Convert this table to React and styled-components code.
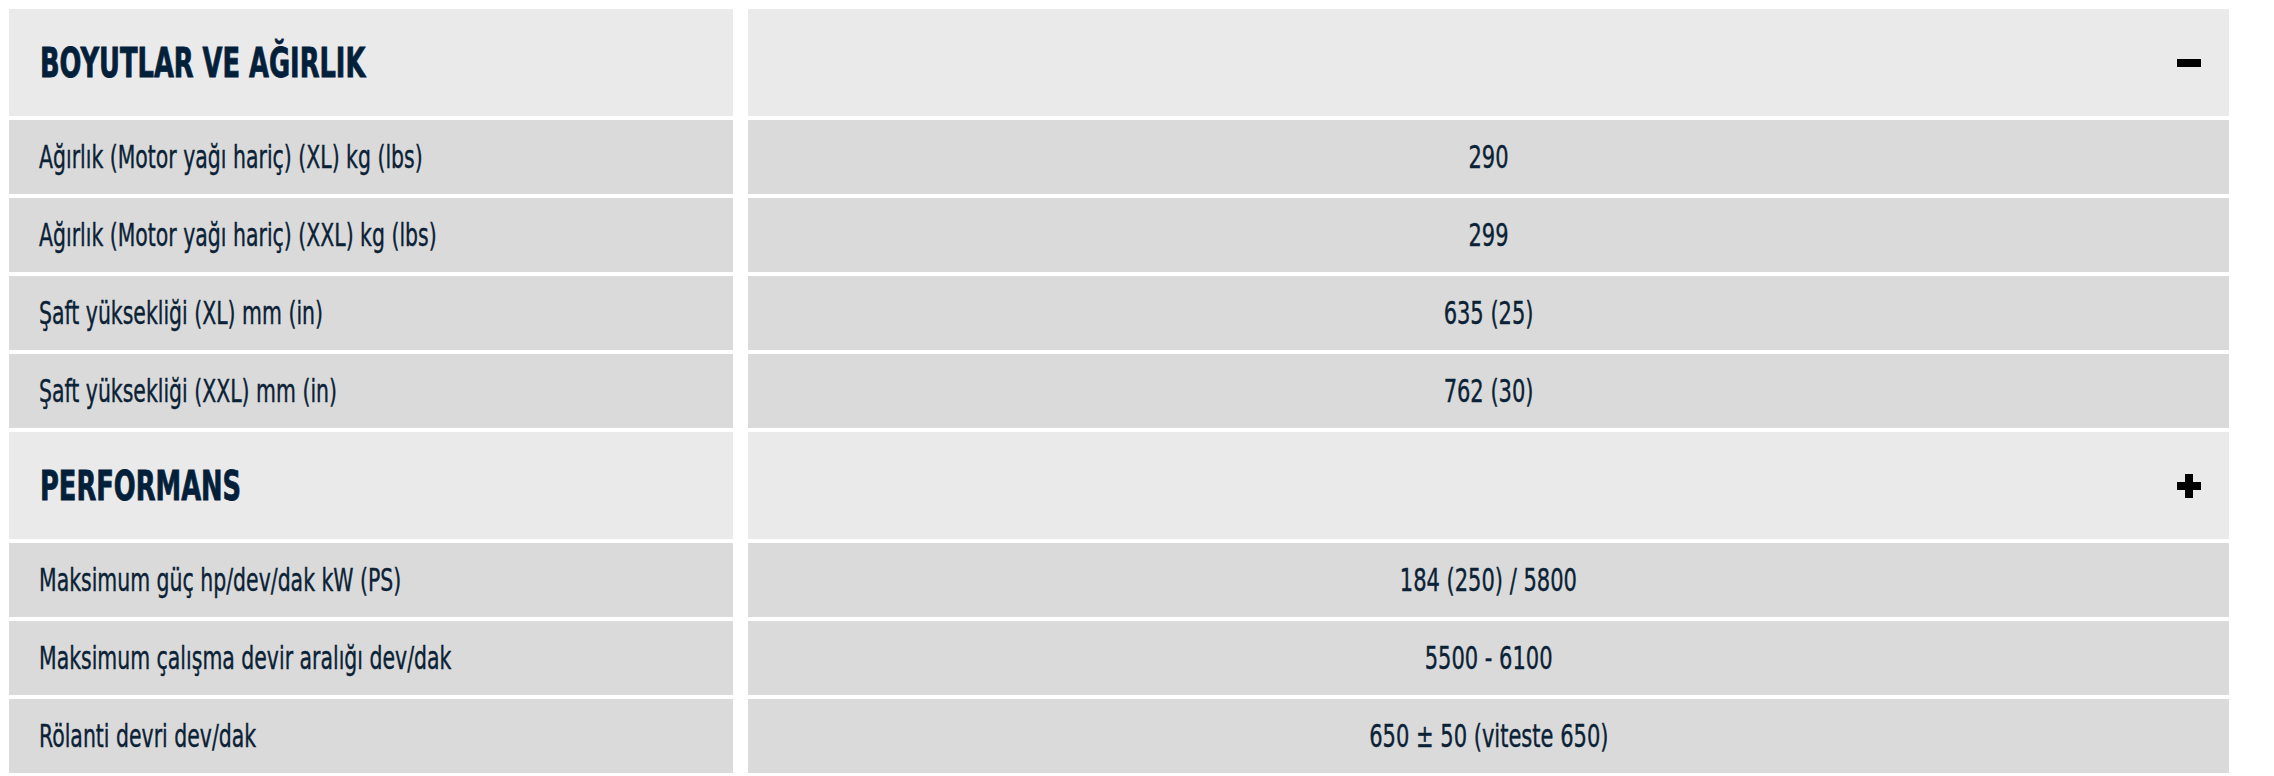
import styled, { createGlobalStyle } from 'styled-components';

const sections = [
  {
    title: 'BOYUTLAR VE AĞIRLIK',
    open: true,
    rows: [
      ['Ağırlık (Motor yağı hariç) (XL) kg (lbs)', '290'],
      ['Ağırlık (Motor yağı hariç) (XXL) kg (lbs)', '299'],
      ['Şaft yüksekliği (XL) mm (in)', '635 (25)'],
      ['Şaft yüksekliği (XXL) mm (in)', '762 (30)'],
    ],
  },
  {
    title: 'PERFORMANS',
    open: false,
    rows: [
      ['Maksimum güç hp/dev/dak kW (PS)', '184 (250) / 5800'],
      ['Maksimum çalışma devir aralığı dev/dak', '5500 - 6100'],
      ['Rölanti devri dev/dak', '650 ± 50 (viteste 650)'],
    ],
  },
];

function ToggleIcon({ open }) {
  return (
    <svg width="24" height="24" viewBox="0 0 24 24">
      <rect x="0" y="8" width="24" height="8" fill="#000" />
      {!open && <rect x="8" y="0" width="8" height="24" fill="#000" />}
    </svg>
  );
}

function App() {
  return (
    <>
      <GlobalStyle />
      <StyledTable>
        {sections.map(section => (
          <StyledSection key={section.title}>
            <StyledTitleCell>
              <StyledText $origin="left" $squeeze={0.715}>
                {section.title}
              </StyledText>
            </StyledTitleCell>
            <StyledToggleCell>
              <ToggleIcon open={section.open} />
            </StyledToggleCell>
            {section.rows.map(([label, value]) => (
              <StyledRow key={label}>
                <StyledLabelCell>
                  <StyledText $origin="left" $squeeze={0.71}>
                    {label}
                  </StyledText>
                </StyledLabelCell>
                <StyledValueCell>
                  <StyledText $origin="center" $squeeze={0.73}>
                    {value}
                  </StyledText>
                </StyledValueCell>
              </StyledRow>
            ))}
          </StyledSection>
        ))}
      </StyledTable>
    </>
  );
}

const GlobalStyle = createGlobalStyle`
  body {
    margin: 9px 0 0 9px;
    background: #fff;
    font-family: "DejaVu Sans Condensed", "DejaVu Sans", "Liberation Sans", sans-serif;
    font-stretch: condensed;
    color: #0b2236;
  }
`;

const StyledTable = styled.div`
  display: grid;
  grid-template-columns: 724px 1481px;
  column-gap: 15px;
  row-gap: 4px;
`;

const StyledSection = styled.div`
  display: contents;
`;

const StyledRow = styled.div`
  display: contents;
`;

const StyledText = styled.span`
  display: inline-block;
  white-space: nowrap;
  transform: scaleX(${p => p.$squeeze});
  transform-origin: ${p => p.$origin} center;
`;

const StyledTitleCell = styled.div`
  display: flex;
  align-items: center;
  height: 107px;
  padding-left: 31px;
  background-color: #eaeaea;
  font-size: 40px;
  font-weight: 700;
  color: #03203a;
  -webkit-text-stroke: 0.8px #03203a;
`;

const StyledToggleCell = styled.div`
  display: flex;
  align-items: center;
  justify-content: flex-end;
  height: 107px;
  padding-right: 28px;
  background-color: #eaeaea;
`;

const StyledLabelCell = styled.div`
  display: flex;
  align-items: center;
  height: 74px;
  padding-left: 30px;
  background-color: #dadada;
  font-size: 32px;
  -webkit-text-stroke: 0.4px #0b2236;
`;

const StyledValueCell = styled.div`
  display: flex;
  align-items: center;
  justify-content: center;
  height: 74px;
  background-color: #dadada;
  font-size: 32px;
  -webkit-text-stroke: 0.4px #0b2236;
`;

export default App;
